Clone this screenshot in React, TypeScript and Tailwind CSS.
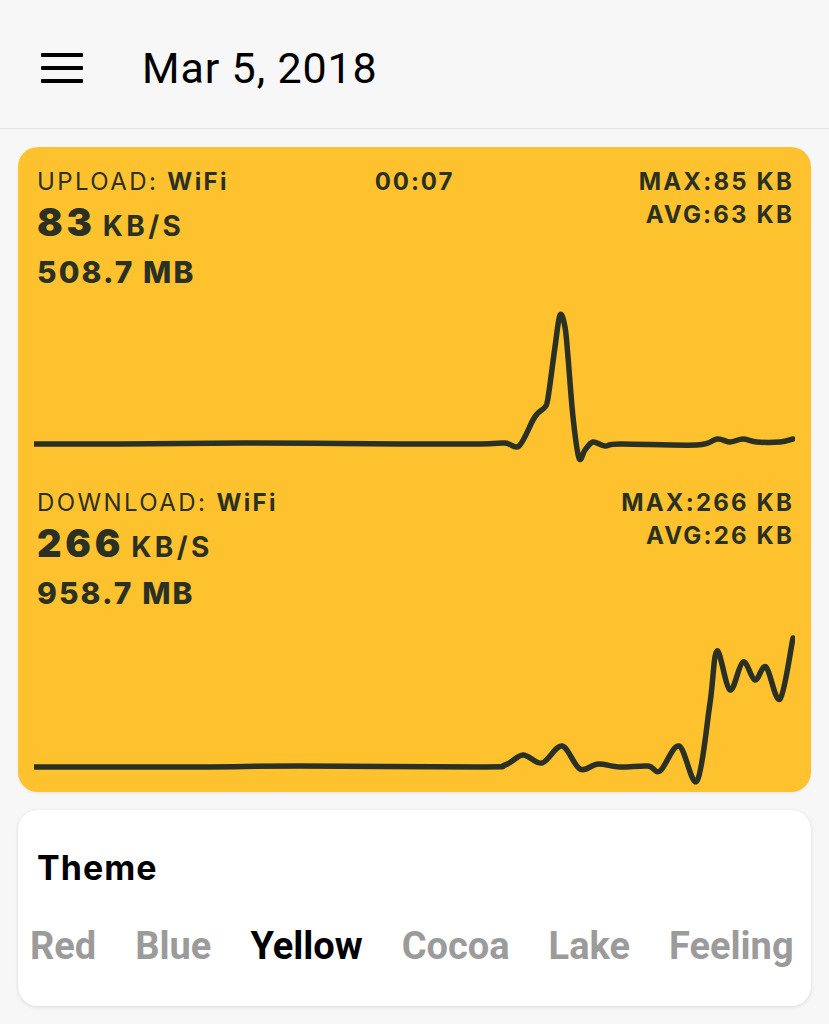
import React from 'react'

type Pt = [number, number]

// smooth line through the sampled points (catmull-rom -> cubic bezier)
function smoothPath(pts: Pt[]): string {
  let d = `M${pts[0][0]},${pts[0][1]}`
  for (let i = 0; i < pts.length - 1; i++) {
    const p0 = pts[i - 1] ?? pts[i]
    const p1 = pts[i]
    const p2 = pts[i + 1]
    const p3 = pts[i + 2] ?? p2
    const c1x = p1[0] + (p2[0] - p0[0]) / 6
    const c1y = p1[1] + (p2[1] - p0[1]) / 6
    const c2x = p2[0] - (p3[0] - p1[0]) / 6
    const c2y = p2[1] - (p3[1] - p1[1]) / 6
    d += ` C${c1x.toFixed(1)},${c1y.toFixed(1)} ${c2x.toFixed(1)},${c2y.toFixed(1)} ${p2[0]},${p2[1]}`
  }
  return d
}

const uploadPts: Pt[] = [
  [34, 444], [120, 444], [250, 443], [400, 444], [480, 444], [505, 443], [519, 446],
  [533, 420], [538, 413], [545, 407], [548, 398], [555, 347], [560, 315], [565, 327],
  [568, 357], [573, 417], [579, 458], [585, 450], [593, 442], [605, 446], [620, 444],
  [697, 445], [717, 439], [730, 442], [743, 439], [757, 442], [780, 442], [793, 439],
]

const downloadPts: Pt[] = [
  [34, 767], [200, 767], [300, 766], [480, 767], [505, 765], [523, 755], [542, 763],
  [562, 746], [580, 769], [598, 764], [620, 767], [648, 766], [660, 771], [679, 746],
  [697, 781], [710, 703], [717, 651], [730, 690], [743, 662], [755, 680], [766, 667],
  [780, 699], [793, 638],
]

interface SectionProps {
  kind: string
  speed: string
  total: string
  max: string
  avg: string
  time?: string
  points: Pt[]
  viewTop: number
  chartHeight: number
}

function TrafficSection({ kind, speed, total, max, avg, time, points, viewTop, chartHeight }: SectionProps) {
  return (
    <div>
      <div className="grid grid-cols-[1fr_auto_1fr] px-[19px]">
        <div>
          <div className="text-[24px] leading-[30px] tracking-[0.1em] whitespace-nowrap">
            {kind}: <span className="font-bold">WiFi</span>
          </div>
          <div className="h-[52px] pt-[5px] flex items-baseline whitespace-nowrap">
            <span className="text-[38px] leading-[40px] font-black tracking-[0.1em]">{speed}</span>
            <span className="text-[28px] leading-[40px] font-bold tracking-[0.12em] ml-[7px]">KB/S</span>
          </div>
          <div className="text-[30px] leading-[46px] font-extrabold tracking-[0.07em] whitespace-nowrap">{total}</div>
        </div>
        <div className="text-[24px] leading-[30px] font-bold tracking-[0.08em] text-center">{time}</div>
        <div className="text-right text-[24px] leading-[30px] font-bold tracking-[0.09em] -mr-[2px]">
          <div>{max}</div>
          <div className="mt-[3px]">{avg}</div>
        </div>
      </div>
      <div className="px-[16px]">
        <svg
          width={761}
          height={chartHeight}
          viewBox={`34 ${viewTop} 761 ${chartHeight}`}
          className="block"
        >
          <path
            d={smoothPath(points)}
            fill="none"
            stroke="#2a3122"
            strokeWidth={5.5}
            strokeLinecap="round"
            strokeLinejoin="round"
          />
        </svg>
      </div>
    </div>
  )
}

const themes = ['Red', 'Blue', 'Yellow', 'Cocoa', 'Lake', 'Feeling']

export default function App() {
  return (
    <div className="min-h-screen w-[829px] bg-[#f7f7f7]" style={{ fontFamily: 'Inter, "Liberation Sans", sans-serif' }}>
      {/* top bar */}
      <header className="h-[129px] border-b border-[#e3e3e3] flex items-center pt-[8px]">
        <div className="ml-[41px] w-[42px] flex flex-col gap-[9px]">
          <span className="block h-[4px] bg-black rounded-[1px]" />
          <span className="block h-[4px] bg-black rounded-[1px]" />
          <span className="block h-[4px] bg-black rounded-[1px]" />
        </div>
        <h1
          className="ml-[59px] text-[43px] leading-[50px] tracking-[0.02em] text-black font-normal"
          style={{ fontFamily: 'Roboto, sans-serif' }}
        >
          Mar 5, 2018
        </h1>
      </header>

      <main className="px-[18px] pt-[18px] flex flex-col gap-[18px]">
        {/* traffic card */}
        <section className="bg-[#fec22f] rounded-[20px] pt-[20px] text-[#2a3122] shadow-[0_1px_3px_rgba(0,0,0,0.08)]">
          <TrafficSection
            kind="UPLOAD"
            speed="83"
            total="508.7 MB"
            time="00:07"
            max="MAX:85 KB"
            avg="AVG:63 KB"
            points={uploadPts}
            viewTop={295}
            chartHeight={193}
          />
          <TrafficSection
            kind="DOWNLOAD"
            speed="266"
            total="958.7 MB"
            max="MAX:266 KB"
            avg="AVG:26 KB"
            points={downloadPts}
            viewTop={616}
            chartHeight={176}
          />
        </section>

        {/* theme picker */}
        <section className="bg-white rounded-[20px] pt-[38px] pb-[38px] shadow-[0_1px_4px_rgba(0,0,0,0.12)]">
          <h2 className="px-[19px] text-[34px] leading-[40px] tracking-[0.03em] font-bold text-black">Theme</h2>
          <div
            className="mt-[36px] pl-[12px] flex gap-[39px] text-[38px] leading-[44px] font-bold whitespace-nowrap overflow-hidden"
            style={{ fontFamily: 'Roboto, sans-serif' }}
          >
            {themes.map((t) => (
              <span key={t} className={t === 'Yellow' ? 'text-black' : 'text-[#9b9b9b]'}>
                {t}
              </span>
            ))}
          </div>
        </section>
      </main>
    </div>
  )
}
